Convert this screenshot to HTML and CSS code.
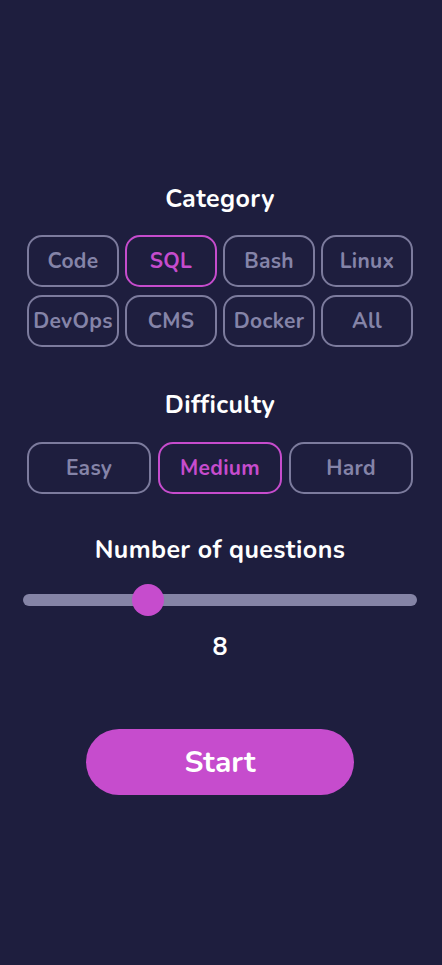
FILE: index.html
```html
<!DOCTYPE html>
<html lang="en">
<head>
<meta charset="utf-8">
<title>Quiz setup</title>
<link rel="stylesheet" href="styles.css">
</head>
<body>
<main class="setup">
  <section class="block">
    <h2 class="title">Category</h2>
    <div class="grid grid-4">
      <button class="chip">Code</button>
      <button class="chip active">SQL</button>
      <button class="chip">Bash</button>
      <button class="chip">Linux</button>
      <button class="chip">DevOps</button>
      <button class="chip">CMS</button>
      <button class="chip">Docker</button>
      <button class="chip">All</button>
    </div>
  </section>
  <section class="block block-difficulty">
    <h2 class="title">Difficulty</h2>
    <div class="grid grid-3">
      <button class="chip">Easy</button>
      <button class="chip active">Medium</button>
      <button class="chip">Hard</button>
    </div>
  </section>
  <section class="block block-count">
    <h2 class="title">Number of questions</h2>
    <input class="slider" type="range" min="5" max="15" value="8">
    <div class="value">8</div>
  </section>
  <div class="actions">
    <button class="start">Start</button>
  </div>
</main>
</body>
</html>
```
FILE: styles.css
```css
* { box-sizing: border-box; }
html, body {
  margin: 0;
  padding: 0;
  background: #1e1e3e;
}
body {
  font-family: "Nunito", "Lato", "Noto Sans", sans-serif;
  font-weight: 700;
  color: #ffffff;
  min-height: 965px;
}
.setup {
  padding: 183px 25px 0 23px;
}
.title {
  margin: 0;
  font-size: 25px;
  line-height: 32px;
  letter-spacing: 0.4px;
  font-weight: 700;
  text-align: center;
  color: #ffffff;
}
.grid {
  display: grid;
  margin: 20px 4px 0 4px;
}
.grid-4 {
  grid-template-columns: repeat(4, 1fr);
  gap: 8px 6px;
}
.grid-3 {
  grid-template-columns: repeat(3, 1fr);
  gap: 7px;
  margin-top: 21px;
}
.chip {
  height: 52px;
  padding: 0;
  border: 2px solid #7c7b9d;
  border-radius: 15px;
  background: transparent;
  color: #8584a8;
  font-family: inherit;
  font-size: 21px;
  letter-spacing: 0.3px;
  font-weight: 700;
  white-space: nowrap;
}
.chip.active {
  border-color: #c64ccd;
  color: #c64ccd;
}
.block-difficulty { margin-top: 42px; }
.block-count { margin-top: 40px; }
.slider {
  -webkit-appearance: none;
  appearance: none;
  display: block;
  width: 100%;
  height: 32px;
  margin: 18px 0 0 0;
  background: transparent;
}
.slider::-webkit-slider-runnable-track {
  height: 12px;
  border-radius: 6px;
  background: #8584a6;
}
.slider::-webkit-slider-thumb {
  -webkit-appearance: none;
  width: 32px;
  height: 32px;
  margin-top: -10px;
  border-radius: 50%;
  background: #c64ccd;
  border: none;
}
.value {
  margin-top: 15px;
  font-size: 25px;
  line-height: 32px;
  text-align: center;
}
.actions {
  display: flex;
  justify-content: center;
  margin-top: 66px;
}
.start {
  width: 268px;
  height: 66px;
  border: none;
  border-radius: 33px;
  background: #c64ccd;
  color: #ffffff;
  font-family: inherit;
  font-size: 30px;
  font-weight: 700;
}
```
